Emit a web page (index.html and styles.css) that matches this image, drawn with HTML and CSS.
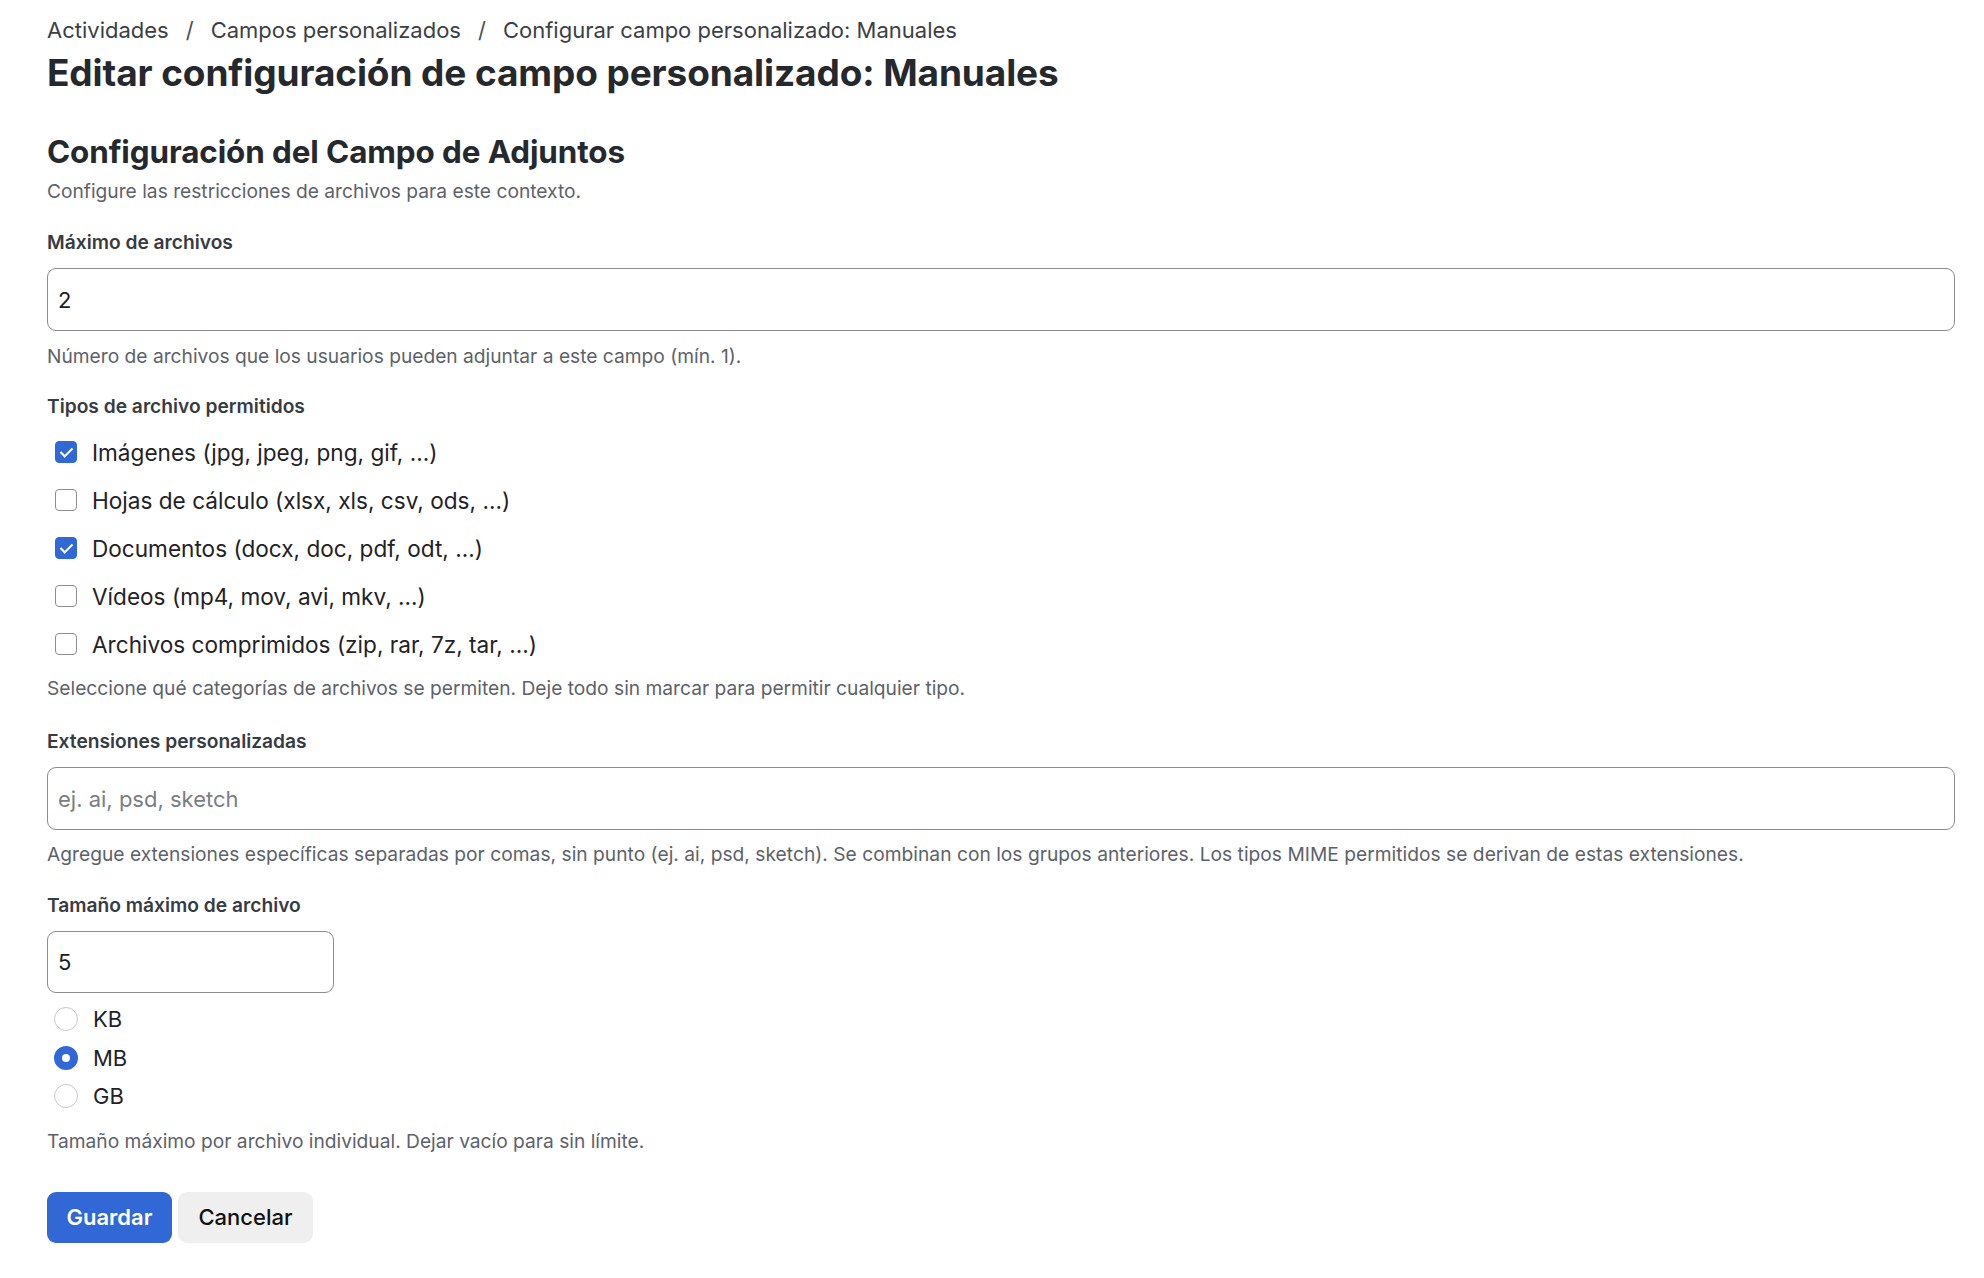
FILE: index.html
```html
<!DOCTYPE html>
<html lang="es">
<head>
<meta charset="utf-8">
<title>Editar configuración de campo personalizado: Manuales</title>
<link rel="stylesheet" href="styles.css">
</head>
<body>
<main class="page">
  <nav class="breadcrumb">
    <a href="#">Actividades</a><span class="sep">/</span><a href="#">Campos personalizados</a><span class="sep">/</span><span>Configurar campo personalizado: Manuales</span>
  </nav>
  <h1 class="title">Editar configuración de campo personalizado: Manuales</h1>

  <section class="section">
    <h2 class="section-title">Configuración del Campo de Adjuntos</h2>
    <p class="section-desc">Configure las restricciones de archivos para este contexto.</p>
  </section>

  <form class="form">
    <div class="field">
      <label class="label" for="max">Máximo de archivos</label>
      <input class="input" id="max" type="text" value="2">
      <small class="help">Número de archivos que los usuarios pueden adjuntar a este campo (mín. 1).</small>
    </div>

    <div class="field field-checks">
      <div class="label">Tipos de archivo permitidos</div>
      <div class="checks">
        <label class="check"><input type="checkbox" checked><span>Imágenes (jpg, jpeg, png, gif, ...)</span></label>
        <label class="check"><input type="checkbox"><span>Hojas de cálculo (xlsx, xls, csv, ods, ...)</span></label>
        <label class="check"><input type="checkbox" checked><span>Documentos (docx, doc, pdf, odt, ...)</span></label>
        <label class="check"><input type="checkbox"><span>Vídeos (mp4, mov, avi, mkv, ...)</span></label>
        <label class="check"><input type="checkbox"><span>Archivos comprimidos (zip, rar, 7z, tar, ...)</span></label>
      </div>
      <small class="help help-checks">Seleccione qué categorías de archivos se permiten. Deje todo sin marcar para permitir cualquier tipo.</small>
    </div>

    <div class="field field-ext">
      <label class="label" for="ext">Extensiones personalizadas</label>
      <input class="input" id="ext" type="text" placeholder="ej. ai, psd, sketch">
      <small class="help help-ext">Agregue extensiones específicas separadas por comas, sin punto (ej. ai, psd, sketch). Se combinan con los grupos anteriores. Los tipos MIME permitidos se derivan de estas extensiones.</small>
    </div>

    <div class="field">
      <label class="label" for="size">Tamaño máximo de archivo</label>
      <input class="input input-small" id="size" type="text" value="5">
      <div class="radios">
        <label class="radio"><input type="radio" name="unit"><span>KB</span></label>
        <label class="radio"><input type="radio" name="unit" checked><span>MB</span></label>
        <label class="radio"><input type="radio" name="unit"><span>GB</span></label>
      </div>
      <small class="help">Tamaño máximo por archivo individual. Dejar vacío para sin límite.</small>
    </div>

    <div class="actions">
      <button type="button" class="btn btn-primary">Guardar</button>
      <button type="button" class="btn btn-secondary">Cancelar</button>
    </div>
  </form>
</main>
</body>
</html>
```
FILE: styles.css
```css
* { box-sizing: border-box; }

html, body {
  margin: 0;
  padding: 0;
  background: #ffffff;
}

body {
  font-family: Inter, "Noto Sans", "Liberation Sans", sans-serif;
  color: #1f2227;
}

.page {
  padding: 18px 29px 40px 47px;
}

.breadcrumb {
  font-size: 22px;
  line-height: 24px;
  color: #3b3f46;
  display: flex;
  align-items: center;
  white-space: nowrap;
}
.breadcrumb a {
  color: #3b3f46;
  text-decoration: none;
}
.breadcrumb .sep {
  margin: 0 17px;
  color: #4a4e55;
}

.title {
  margin: 11px 0 0;
  font-size: 37px;
  line-height: 40px;
  font-weight: 700;
  color: #25282c;
  letter-spacing: -0.1px;
  white-space: nowrap;
}

.section { margin: 0; }

.section-title {
  margin: 41px 0 0;
  font-size: 31.4px;
  line-height: 36px;
  font-weight: 700;
  color: #25282c;
  letter-spacing: -0.1px;
}

.section-desc {
  margin: 9px 0 0;
  font-size: 19.2px;
  line-height: 24px;
  color: #5d626a;
}

.form {
  display: flex;
  flex-direction: column;
  margin-top: 27px;
}

.field {
  display: flex;
  flex-direction: column;
  align-items: flex-start;
  margin-bottom: 26px;
}
.field-checks { margin-bottom: 29px; }
.field-ext { margin-bottom: 27px; }

.label {
  font-size: 19.2px;
  line-height: 24px;
  font-weight: 600;
  color: #373b42;
}

.input {
  margin-top: 14px;
  width: 100%;
  height: 63px;
  border: 1.5px solid #8c8c8c;
  border-radius: 9px;
  padding: 0 10px;
  font-family: inherit;
  font-size: 22px;
  color: #1b1d21;
  background: #fff;
  outline: none;
}
.input::placeholder { color: #7a7e85; }

.input-small {
  width: 287px;
  height: 62px;
}

.help {
  margin-top: 13px;
  font-size: 19.2px;
  line-height: 24px;
  color: #5d626a;
}
.help-checks { margin-top: 8px; }
.help-ext { margin-top: 12px; letter-spacing: 0.02px; }

.checks {
  display: flex;
  flex-direction: column;
  margin-top: 10px;
}

.check, .radio {
  display: flex;
  align-items: center;
  height: 48px;
  font-size: 22.6px;
  color: #1f2227;
}

.check input {
  appearance: none;
  -webkit-appearance: none;
  margin: 0 15px 0 8px;
  width: 22px;
  height: 22px;
  border: 1.5px solid #8c8c8c;
  border-radius: 4px;
  background: #fff;
  position: relative;
  flex: none;
}
.check input:checked {
  background: #3267d6;
  border-color: #3267d6;
}
.check input:checked::after {
  content: "";
  position: absolute;
  left: 6.5px;
  top: 2.5px;
  width: 5px;
  height: 10px;
  border-right: 2.2px solid #fff;
  border-bottom: 2.2px solid #fff;
  transform: rotate(45deg);
}

.radios {
  display: flex;
  flex-direction: column;
  margin-top: 7px;
}
.radio {
  height: 38.5px;
  font-size: 22px;
}

.radio input {
  appearance: none;
  -webkit-appearance: none;
  margin: 0 15px 0 7px;
  width: 24px;
  height: 24px;
  border: 1px solid #c9c9c9;
  border-radius: 50%;
  background: #fff;
  flex: none;
}
.radio input:checked {
  border: 8px solid #3267d6;
}

.actions {
  display: flex;
  gap: 6px;
  margin-top: 13px;
}

.btn {
  height: 51px;
  border: none;
  border-radius: 9px;
  font-family: inherit;
  font-size: 22px;
  font-weight: 600;
  padding: 0;
  cursor: pointer;
}
.btn-primary {
  background: #3267d6;
  color: #fff;
  width: 125px;
}
.btn-secondary {
  background: #efefef;
  color: #111;
  width: 135px;
  font-weight: 500;
}
```
